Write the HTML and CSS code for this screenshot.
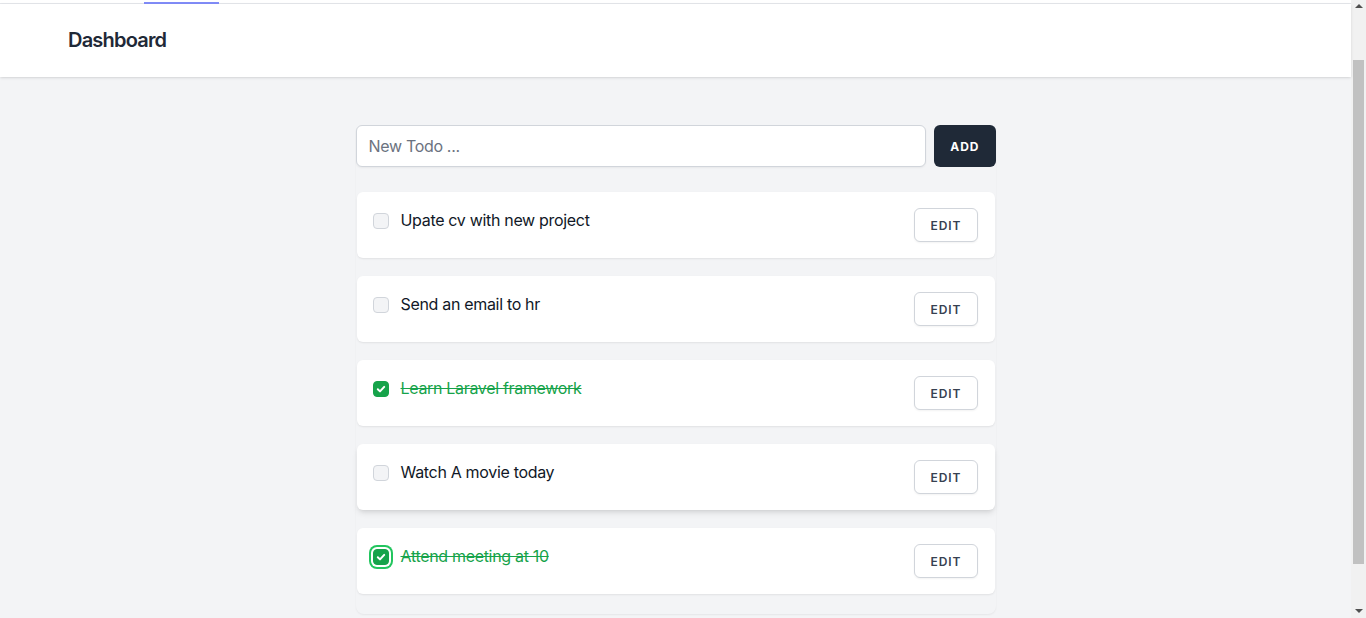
FILE: index.html
```html
<!DOCTYPE html>
<html lang="en">
<head>
<meta charset="utf-8">
<title>Dashboard</title>
<link rel="stylesheet" href="styles.css">
</head>
<body>
<div class="page">
  <nav class="nav">
    <span class="nav-link-active"></span>
  </nav>
  <header class="header">
    <h2 class="header-title">Dashboard</h2>
  </header>
  <main class="main">
    <div class="todo-panel">
      <form class="todo-form">
        <input class="todo-input" type="text" placeholder="New Todo ...">
        <button class="btn-add" type="button">Add</button>
      </form>
      <ul class="todo-list">
        <li class="todo-card">
          <label class="todo-label">
            <span class="checkbox"></span>
            <span class="todo-text">Upate cv with new project</span>
          </label>
          <button class="btn-edit" type="button">Edit</button>
        </li>
        <li class="todo-card">
          <label class="todo-label">
            <span class="checkbox"></span>
            <span class="todo-text">Send an email to hr</span>
          </label>
          <button class="btn-edit" type="button">Edit</button>
        </li>
        <li class="todo-card">
          <label class="todo-label">
            <span class="checkbox checked"><svg viewBox="0 0 16 16" width="16" height="16"><path d="M4.8 8.3 L7 10.4 L11.2 5.9" fill="none" stroke="#fff" stroke-width="2" stroke-linecap="round" stroke-linejoin="round"/></svg></span>
            <span class="todo-text done">Learn Laravel framework</span>
          </label>
          <button class="btn-edit" type="button">Edit</button>
        </li>
        <li class="todo-card hovered">
          <label class="todo-label">
            <span class="checkbox"></span>
            <span class="todo-text">Watch A movie today</span>
          </label>
          <button class="btn-edit" type="button">Edit</button>
        </li>
        <li class="todo-card">
          <label class="todo-label">
            <span class="checkbox checked focused"><svg viewBox="0 0 16 16" width="16" height="16"><path d="M4.8 8.3 L7 10.4 L11.2 5.9" fill="none" stroke="#fff" stroke-width="2" stroke-linecap="round" stroke-linejoin="round"/></svg></span>
            <span class="todo-text done">Attend meeting at 10</span>
          </label>
          <button class="btn-edit" type="button">Edit</button>
        </li>
      </ul>
    </div>
  </main>
</div>
<div class="scrollbar">
  <span class="scroll-arrow up"></span>
  <span class="scroll-track"><span class="scroll-thumb"></span></span>
  <span class="scroll-arrow down"></span>
</div>
</body>
</html>
```
FILE: styles.css
```css
* { box-sizing: border-box; }
html, body { margin: 0; padding: 0; }
body {
  display: flex;
  height: 618px;
  overflow: hidden;
  font-family: Inter, "Noto Sans", "Liberation Sans", sans-serif;
  color: #111827;
}
.page {
  flex: 1;
  background: #f3f4f6;
  min-width: 0;
}
.nav {
  height: 4px;
  background: #fff;
  border-bottom: 1px solid #e5e7eb;
  padding-left: 144px;
  display: flex;
  align-items: flex-end;
}
.nav-link-active {
  display: block;
  width: 75px;
  height: 2px;
  background: #818cf8;
  margin-bottom: -1px;
}
.header {
  background: #fff;
  box-shadow: 0 1px 3px rgba(0,0,0,0.1), 0 1px 2px -1px rgba(0,0,0,0.1);
  padding: 22px 0 23px 68px;
  position: relative;
}
.header-title {
  margin: 0;
  font-size: 20px;
  line-height: 28px;
  font-weight: 600;
  letter-spacing: -0.04em;
  color: #1f2937;
}
.main {
  padding-top: 48px;
}
.todo-panel {
  width: 640px;
  margin: 0 auto;
  border-radius: 8px;
  box-shadow: 0 1px 2px rgba(0,0,0,0.06);
  padding-bottom: 20px;
}
.todo-form {
  display: flex;
  gap: 8px;
  margin: 0 0 25px;
}
.todo-input {
  flex: 1;
  height: 42px;
  border: 1px solid #d1d5db;
  border-radius: 6px;
  box-shadow: 0 1px 2px rgba(0,0,0,0.05);
  padding: 0 12px;
  font: inherit;
  font-size: 16px;
  letter-spacing: -0.02em;
  color: #111827;
  background: #fff;
}
.todo-input::placeholder { color: #6b7280; }
.btn-add {
  height: 42px;
  padding: 0 16px;
  background: #1f2937;
  color: #fff;
  border: 0;
  border-radius: 6px;
  font: inherit;
  font-size: 12px;
  font-weight: 700;
  letter-spacing: 0.08em;
  text-transform: uppercase;
}
.todo-list {
  list-style: none;
  margin: 0;
  padding: 0;
  display: flex;
  flex-direction: column;
  gap: 18px;
}
.todo-card {
  background: #fff;
  border-radius: 6px;
  box-shadow: 0 1px 2px rgba(0,0,0,0.08);
  padding: 16px 17px 16px 16px;
  display: flex;
  justify-content: space-between;
  align-items: flex-start;
  margin: 0 1px;
}
.todo-card.hovered {
  box-shadow: 0 4px 6px -1px rgba(0,0,0,0.1), 0 2px 4px -2px rgba(0,0,0,0.1);
}
.todo-label {
  display: flex;
  align-items: center;
  gap: 12px;
  line-height: 24px;
}
.checkbox {
  width: 16px;
  height: 16px;
  border: 1px solid #d1d5db;
  border-radius: 4px;
  background: #f3f4f6;
  display: flex;
  margin-top: 1px;
}
.checkbox.checked {
  background: #16a34a;
  border-color: #16a34a;
  align-items: center;
  justify-content: center;
}
.checkbox.checked svg { flex: none; }
.checkbox.focused {
  box-shadow: 0 0 0 2px #fff, 0 0 0 4px #22c55e;
}
.todo-text {
  font-size: 16px;
  letter-spacing: -0.02em;
  color: #111827;
}
.todo-text.done {
  color: #16a34a;
  text-decoration: line-through;
}
.btn-edit {
  height: 34px;
  padding: 0 15px;
  background: #fff;
  border: 1px solid #d1d5db;
  border-radius: 6px;
  box-shadow: 0 1px 2px rgba(0,0,0,0.05);
  font: inherit;
  font-size: 12px;
  font-weight: 600;
  letter-spacing: 0.08em;
  text-transform: uppercase;
  color: #374151;
}
.scrollbar {
  width: 15px;
  flex: none;
  background: #f1f1f1;
  display: flex;
  flex-direction: column;
  align-items: center;
}
.scroll-arrow {
  width: 0;
  height: 0;
  border-left: 4px solid transparent;
  border-right: 4px solid transparent;
  margin: 4px 0;
}
.scroll-arrow.up { border-bottom: 4px solid #505050; margin-top: 4px; }
.scroll-arrow.down { border-top: 4px solid #505050; margin-bottom: 5px; }
.scroll-track {
  flex: 1;
  width: 100%;
  padding: 48px 2px 41px;
  display: flex;
}
.scroll-thumb {
  flex: 1;
  background: #c1c1c1;
}
```
